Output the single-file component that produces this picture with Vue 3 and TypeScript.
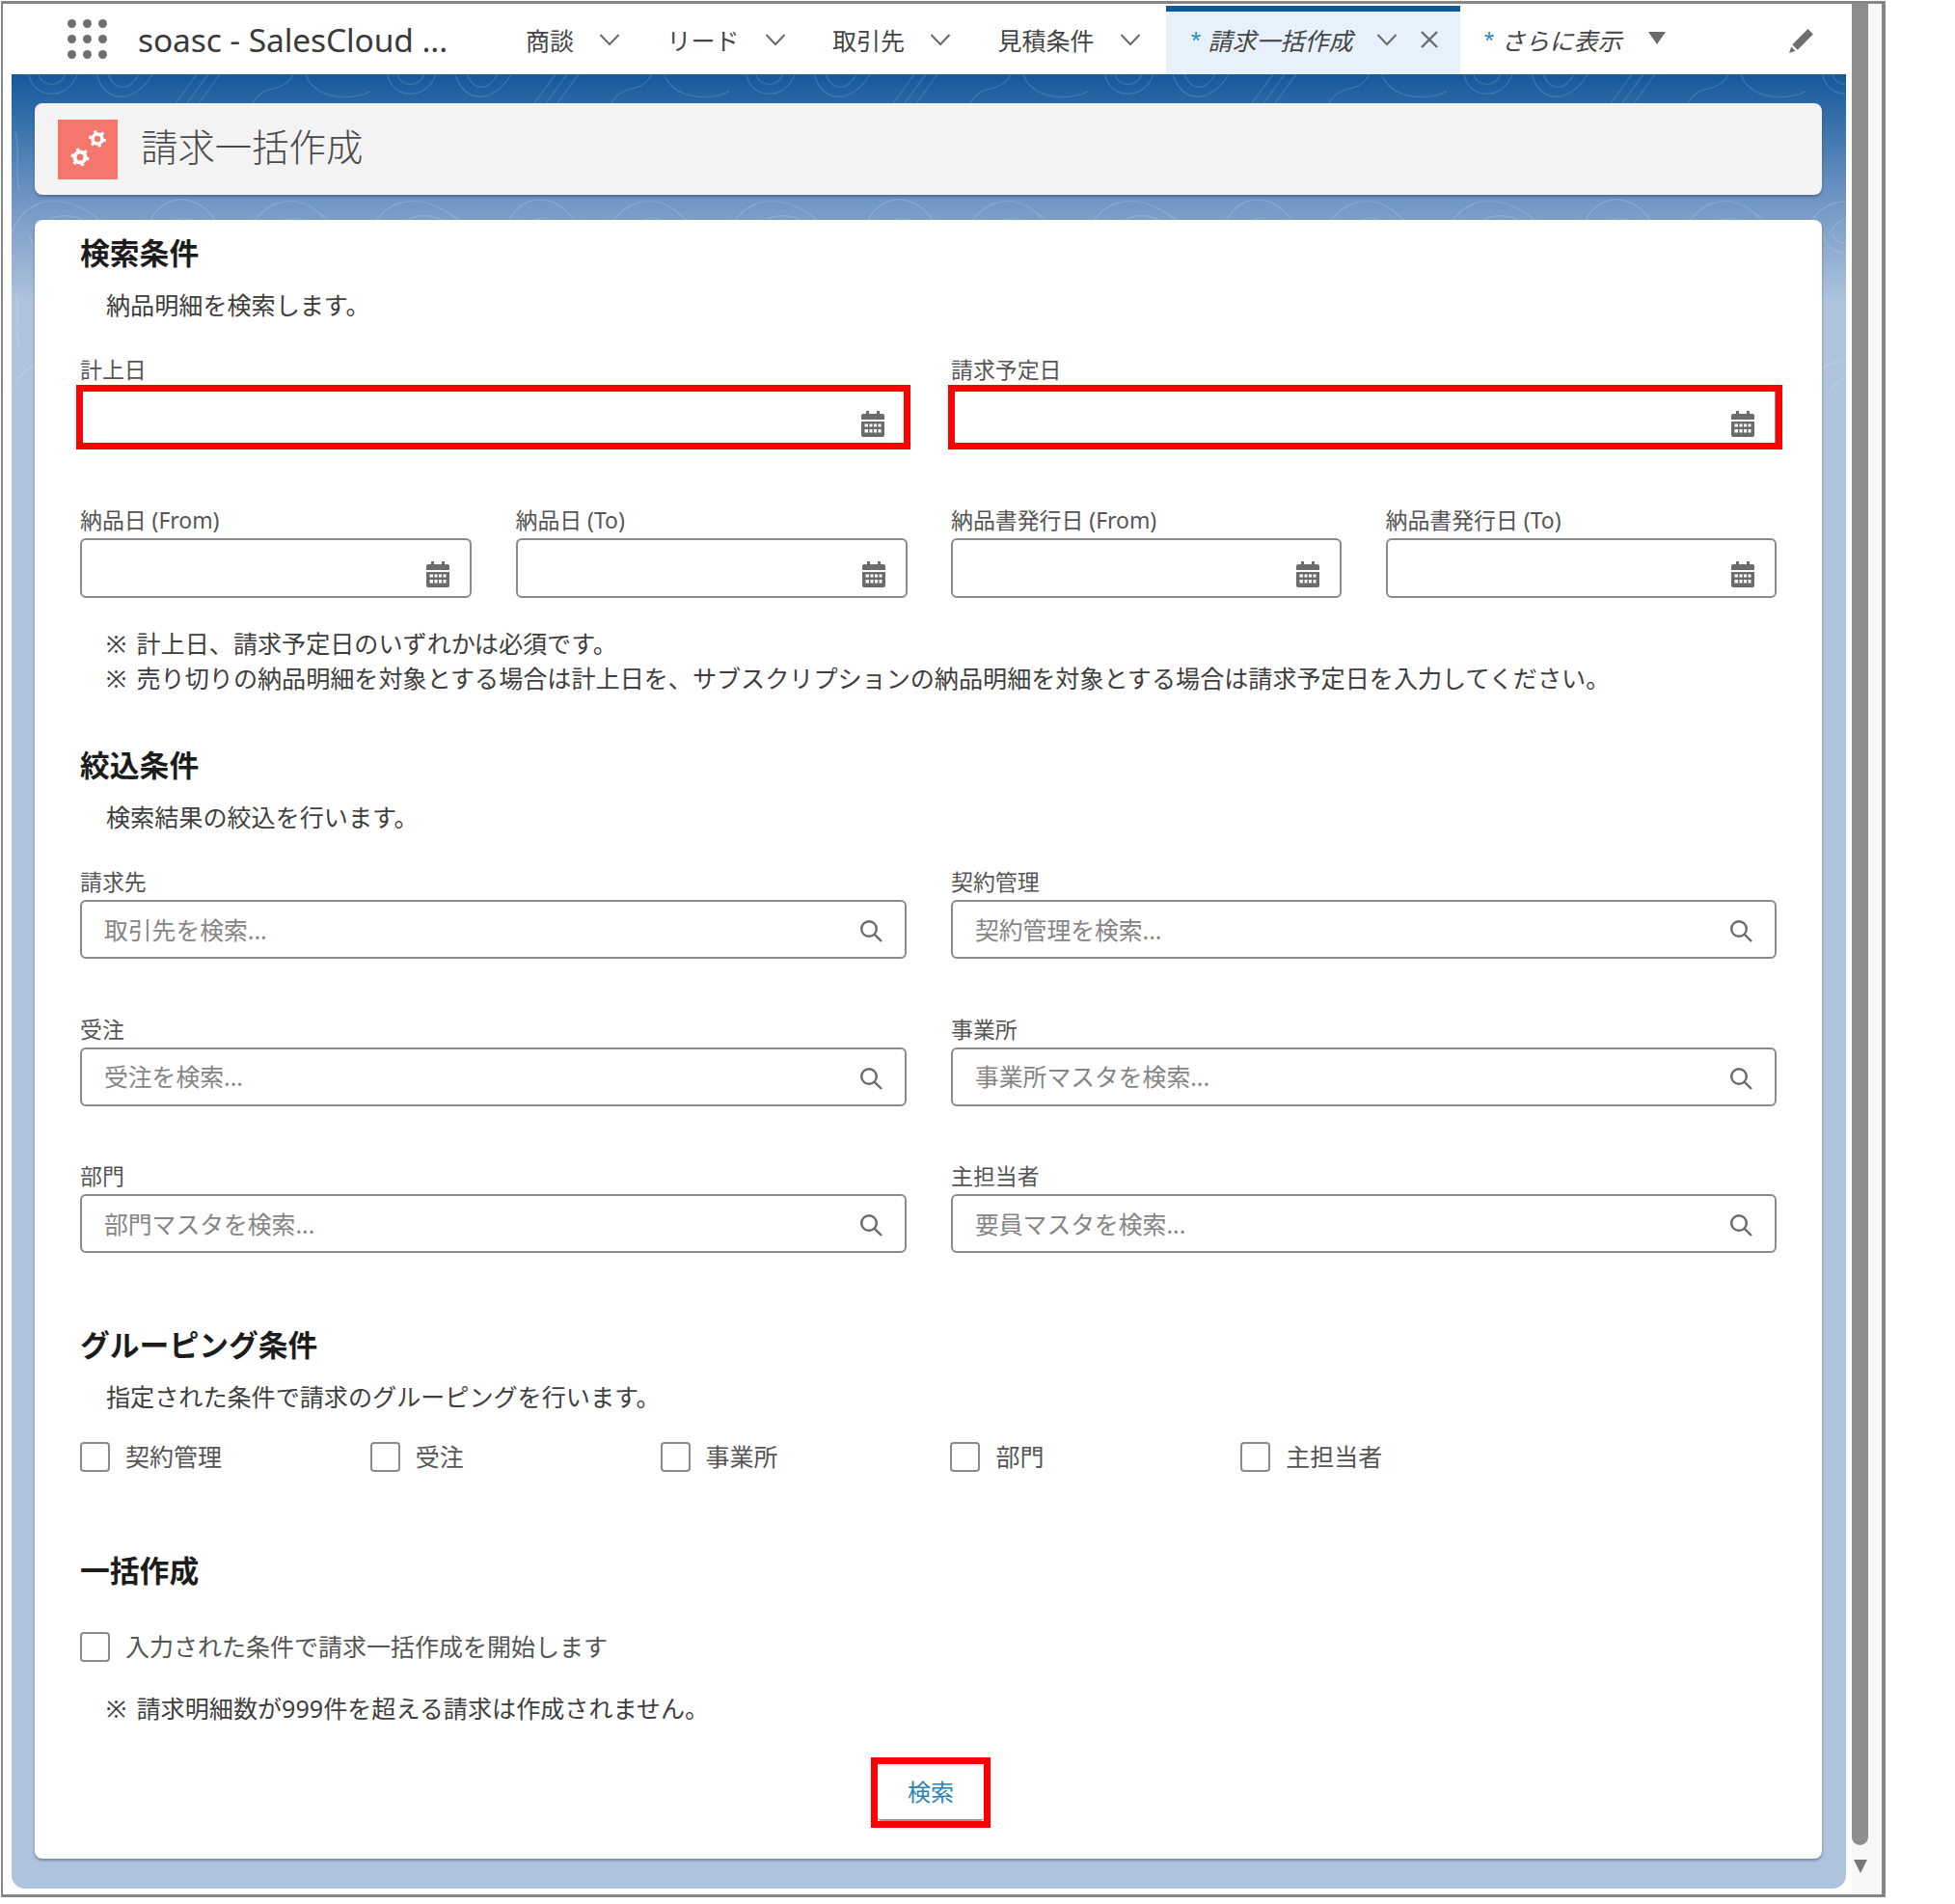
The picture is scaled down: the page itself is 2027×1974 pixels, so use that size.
<script setup lang="ts">
interface Tab { label: string }
interface Field { label: string; placeholder: string }

const tabs: Tab[] = [{ label: '商談' }, { label: 'リード' }, { label: '取引先' }, { label: '見積条件' }]
const dots: number[] = [0, 1, 2, 3, 4, 5, 6, 7, 8]
const dateFields: string[] = ['納品日 (From)', '納品日 (To)', '納品書発行日 (From)', '納品書発行日 (To)']
const lookups: Field[] = [
  { label: '請求先', placeholder: '取引先を検索...' },
  { label: '契約管理', placeholder: '契約管理を検索...' },
  { label: '受注', placeholder: '受注を検索...' },
  { label: '事業所', placeholder: '事業所マスタを検索...' },
  { label: '部門', placeholder: '部門マスタを検索...' },
  { label: '主担当者', placeholder: '要員マスタを検索...' },
]
const groupings: string[] = ['契約管理', '受注', '事業所', '部門', '主担当者']
</script>

<template>
  <div class="frame">
    <div class="main">
      <nav class="nav">
        <div class="launcher"><i v-for="d in dots" :key="d"></i></div>
        <div class="app-name">soasc - SalesCloud ...</div>
        <div v-for="t in tabs" :key="t.label" class="tab">
          <span>{{ t.label }}</span>
          <svg class="chev" viewBox="0 0 22 14"><path d="M1.5 2 L11 12 L20.5 2" /></svg>
        </div>
        <div class="tab-active">
          <b class="star">*</b><span>請求一括作成</span>
          <svg class="chev" viewBox="0 0 22 14"><path d="M1.5 2 L11 12 L20.5 2" /></svg>
          <svg class="close" viewBox="0 0 20 20"><path d="M2 2 L18 18 M18 2 L2 18" /></svg>
        </div>
        <div class="tab-more">
          <b class="star">*</b><span>さらに表示</span>
          <svg class="tri" viewBox="0 0 18 13"><path d="M0 0 H18 L9 13 Z" /></svg>
        </div>
        <svg class="pencil" viewBox="0 0 25 25"><path d="M19 1 L24 6 L9 21 L4 16 Z M3 18 L7 22 L1 24 Z" /></svg>
      </nav>

      <div class="stage">
        <svg class="topo" xmlns="http://www.w3.org/2000/svg" width="1901" height="330">
          <defs>
            <pattern id="contour" width="372" height="165" patternUnits="userSpaceOnUse">
              <g fill="none" stroke="#ffffff" stroke-opacity=".16" stroke-width="1.1">
                <path d="M18 0 C22 26 58 28 68 0" />
                <path d="M28 0 C32 14 50 14 56 0" />
                <path d="M88 0 C98 32 128 30 146 0" />
                <path d="M100 0 C108 18 122 18 132 0" />
                <path d="M170 30 L192 0 M182 30 L204 0 M194 30 L216 0" />
                <path d="M250 30 C262 8 280 22 292 0" />
                <path d="M305 0 C312 22 345 30 372 18" />
                <path d="M0 165 C12 132 40 126 66 136 C92 146 100 165 122 165" />
                <path d="M24 165 C36 146 56 142 76 152 C84 157 88 162 92 165" />
                <path d="M138 165 C150 128 176 124 196 136 C214 148 216 165 226 165" />
                <path d="M160 165 C168 146 186 142 198 165" />
                <path d="M246 165 C256 134 290 122 314 140 C330 152 340 165 352 165" />
                <path d="M272 165 C282 146 300 142 318 165" />
                <path d="M4 60 C10 80 2 100 8 120 M360 60 C368 84 360 100 366 118" />
              </g>
            </pattern>
          </defs>
          <rect width="1901" height="330" fill="url(#contour)" />
        </svg>

        <header class="page-head">
          <div class="head-icon">
            <svg viewBox="0 0 62 62" width="62" height="62">
              <g fill="none" stroke="#fff">
                <circle cx="23" cy="39" r="5.5" stroke-width="4" />
                <circle cx="23" cy="39" r="8" stroke-width="3" stroke-dasharray="3.2 5.2" />
                <circle cx="41" cy="20" r="5" stroke-width="3.6" />
                <circle cx="41" cy="20" r="7.5" stroke-width="3" stroke-dasharray="3 4.85" />
              </g>
            </svg>
          </div>
          <h1>請求一括作成</h1>
        </header>

        <main class="card">
          <h2 class="sec first">検索条件</h2>
          <p class="desc">納品明細を検索します。</p>

          <div class="grid-2 req-row">
            <div class="field">
              <label>計上日</label>
              <div class="input tall">
                <svg class="cal" viewBox="0 0 24 27"><use href="#cal-shape" /></svg>
              </div>
              <span class="red red-left"></span>
            </div>
            <div class="field">
              <label>請求予定日</label>
              <div class="input tall">
                <svg class="cal" viewBox="0 0 24 27"><use href="#cal-shape" /></svg>
              </div>
              <span class="red red-right"></span>
            </div>
          </div>

          <div class="grid-4">
            <div v-for="d in dateFields" :key="d" class="field">
              <label>{{ d }}</label>
              <div class="input tall">
                <svg class="cal" viewBox="0 0 24 27"><use href="#cal-shape" /></svg>
              </div>
            </div>
          </div>

          <div class="notes">
            <p>※ 計上日、請求予定日のいずれかは必須です。</p>
            <p>※ 売り切りの納品明細を対象とする場合は計上日を、サブスクリプションの納品明細を対象とする場合は請求予定日を入力してください。</p>
          </div>

          <h2 class="sec s2">絞込条件</h2>
          <p class="desc">検索結果の絞込を行います。</p>

          <div class="grid-2 lookups">
            <div v-for="f in lookups" :key="f.label" class="field">
              <label>{{ f.label }}</label>
              <div class="input">
                <span class="ph">{{ f.placeholder }}</span>
                <svg class="search" viewBox="0 0 24 24"><circle cx="10" cy="10" r="7.8" /><path d="M15.8 15.8 L23 23" /></svg>
              </div>
            </div>
          </div>

          <h2 class="sec s3">グルーピング条件</h2>
          <p class="desc">指定された条件で請求のグルーピングを行います。</p>

          <div class="checks">
            <div v-for="g in groupings" :key="g" class="check"><i class="box"></i><span>{{ g }}</span></div>
          </div>

          <h2 class="sec s4">一括作成</h2>
          <div class="check solo"><i class="box"></i><span>入力された条件で請求一括作成を開始します</span></div>
          <p class="note-last">※ 請求明細数が999件を超える請求は作成されません。</p>

          <div class="actions">
            <div class="btn-wrap">
              <button class="btn" type="button">検索</button>
              <span class="red red-btn"></span>
            </div>
          </div>
        </main>
      </div>
    </div>

    <aside class="scroll">
      <div class="thumb"></div>
      <svg class="down" viewBox="0 0 14 14"><path d="M0 0 H14 L7 14 Z" /></svg>
    </aside>

    <svg class="defs" width="0" height="0">
      <defs>
        <g id="cal-shape">
          <path fill="#6b6b6b" d="M5 0 H8 V3 H16 V0 H19 V3 H22 Q24 3 24 5 V9 H0 V5 Q0 3 2 3 H5 Z" />
          <path fill="#6b6b6b" fill-rule="evenodd" d="M0 11 H24 V25 Q24 27 22 27 H2 Q0 27 0 25 Z M3.5 13.5 V16.5 H7 V13.5 Z M8.5 13.5 V16.5 H11.5 V13.5 Z M13 13.5 V16.5 H16 V13.5 Z M17.5 13.5 V16.5 H20.5 V13.5 Z M3.5 19 V22.5 H7 V19 Z M8.5 19 V22.5 H11.5 V19 Z M13 19 V22.5 H16 V19 Z M17.5 19 V22.5 H20.5 V19 Z" />
        </g>
      </defs>
    </svg>
  </div>
</template>

<style scoped>
.frame {
  position: relative;
  box-sizing: border-box;
  width: 1954px;
  height: 1966px;
  margin: 1px 0 0 1px;
  border: solid #868686;
  border-width: 3px 4px 3px 2px;
  display: flex;
  background: #fff;
  font-family: "Noto Sans", "Noto Sans CJK JP", sans-serif;
  color: #444;
}
.defs { position: absolute; }
.main {
  flex: 1;
  margin-left: 9px;
  padding-bottom: 6px;
  display: flex;
  flex-direction: column;
  min-width: 0;
}
.scroll {
  width: 37px;
  flex: none;
  background: #f7f7f7;
  border-left: 6px solid #fff;
  box-sizing: border-box;
  display: flex;
  flex-direction: column;
  align-items: flex-start;
}
.thumb {
  width: 17px;
  height: 1909px;
  background: #8e8e8e;
  border-radius: 0 0 9px 9px;
}
.down { width: 14px; height: 14px; margin: 15px 0 0 2px; fill: #777; }

/* nav */
.nav {
  height: 73px;
  flex: none;
  display: flex;
  align-items: center;
  padding-left: 58px;
  padding-right: 33px;
  font-size: 25px;
  color: #444;
}
.launcher {
  width: 41px;
  display: grid;
  grid-template-columns: repeat(3, 9px);
  grid-auto-rows: 9px;
  gap: 7px;
  margin-right: 32px;
}
.launcher i { border-radius: 50%; background: #6f6f6f; }
.app-name {
  width: 402px;
  flex: none;
  font-family: "Noto Sans", sans-serif;
  font-size: 33.5px;
  letter-spacing: -0.1px;
  color: #3a3a3a;
}
.tab { display: flex; align-items: center; gap: 26px; margin-right: 48.5px; }
.tab:nth-of-type(6) { margin-right: 26px; }
.chev { width: 22px; height: 14px; fill: none; stroke: #6b6b6b; stroke-width: 2; flex: none; }
.tab-active {
  align-self: stretch;
  box-sizing: border-box;
  width: 305px;
  margin-top: 2px;
  padding: 0 22px 8px 26px;
  display: flex;
  align-items: center;
  background: #e6f1fb;
  border-top: 6px solid #0b5c99;
  font-style: italic;
  white-space: nowrap;
}
.tab-active .chev { margin-left: 24px; }
.close { width: 20px; height: 20px; margin-left: 23px; fill: none; stroke: #6b6b6b; stroke-width: 2.4; flex: none; }
.tab-more { display: flex; align-items: center; padding-left: 25px; font-style: italic; }
.star {
  width: 18px;
  flex: none;
  font-weight: 400;
  font-style: normal;
  font-size: 20px;
  color: #2a86b8;
}
.tri { width: 18px; height: 13px; margin-left: 27px; fill: #6b6b6b; margin-top: -2px; }
.pencil { width: 27px; height: 27px; margin-left: auto; fill: #6e6e6e; margin-top: 3px; }

/* stage */
.stage {
  position: relative;
  flex: 1;
  box-sizing: border-box;
  padding: 30px 25px 31px 24px;
  display: flex;
  flex-direction: column;
  gap: 26px;
  border-radius: 0 0 14px 14px;
  overflow: hidden;
  background: linear-gradient(#14599b 0, #7096c3 130px, #aec3de 235px, #aec3de 100%);
}
.topo { position: absolute; left: 0; top: 0; }
.page-head {
  position: relative;
  height: 95px;
  flex: none;
  display: flex;
  align-items: center;
  gap: 24px;
  padding-left: 24px;
  background: #f3f3f3;
  border-radius: 8px;
  box-shadow: 0 2px 3px rgba(40, 60, 90, .45);
}
.head-icon { width: 62px; height: 62px; background: #f4766d; flex: none; }
.head-icon svg { display: block; }
h1 {
  margin: -5px 0 0;
  font-size: 38.4px;
  font-weight: 300;
  color: #4a4a4a;
  line-height: 1;
}
.card {
  position: relative;
  flex: 1;
  box-sizing: border-box;
  padding: 16px 47px 0 47px;
  background: #fff;
  border-radius: 8px;
  box-shadow: 0 2px 3px rgba(60, 75, 100, .5);
}
.sec {
  margin: 0;
  font-size: 30.8px;
  font-weight: 700;
  line-height: 36px;
  color: #1c1c1c;
}
.s2 { margin: 54px 0 1px; }
.s3 { margin-top: 77px; }
.s4 { margin-top: 84px; }
.desc {
  margin: 18px 0 0;
  padding-left: 27px;
  font-size: 25.1px;
  line-height: 36px;
  color: #3e3e3e;
}
.grid-2 { display: grid; grid-template-columns: 857px 856px; column-gap: 46px; }
.grid-4 { display: grid; grid-template-columns: 406px 406px 405px 405px; column-gap: 45.5px; margin-top: 62px; }
.req-row { margin-top: 36px; }
.lookups { margin-top: 36px; row-gap: 59.5px; }
.field { position: relative; }
.field label {
  display: block;
  height: 28px;
  font-size: 22.9px;
  line-height: 28px;
  color: #555;
  margin-bottom: 4px;
  white-space: nowrap;
}
.input {
  position: relative;
  box-sizing: border-box;
  height: 61px;
  border: 2px solid #8a8a8a;
  border-radius: 6px;
  background: #fff;
  display: flex;
  align-items: center;
  padding-left: 23px;
}
.input.tall { height: 62px; }
.ph { font-size: 24.8px; color: #858585; margin-top: -2px; }
.cal { position: absolute; right: 21px; top: 22px; width: 24px; height: 27px; }
.search {
  position: absolute;
  right: 23px;
  top: 18px;
  width: 24px;
  height: 24px;
  fill: none;
  stroke: #6b6b6b;
  stroke-width: 2.4;
}
.red { position: absolute; border: 7px solid #ff0000; box-sizing: border-box; pointer-events: none; }
.red-left { left: -4px; right: -4px; top: 29px; bottom: -2px; }
.red-right { left: -3px; right: -6px; top: 29px; bottom: -2px; }
.red-btn { inset: -7px; }
.notes { margin-top: 29px; padding-left: 27px; }
.notes p { margin: 0; font-size: 25.1px; line-height: 36px; color: #3e3e3e; white-space: nowrap; word-spacing: 4px; }
.checks { display: grid; grid-template-columns: repeat(5, 300.8px); margin-top: 29px; }
.check { display: flex; align-items: center; gap: 16px; height: 31px; font-size: 25px; color: #555; }
.check span { margin-top: -3px; }
.box {
  box-sizing: border-box;
  width: 31px;
  height: 31px;
  flex: none;
  border: 2px solid #8a8a8a;
  border-radius: 4px;
  background: #fff;
}
.solo { margin-top: 46px; }
.note-last { margin: 30px 0 0; padding-left: 27px; font-size: 25.1px; line-height: 36px; color: #3e3e3e; word-spacing: 4px; }
.actions { display: flex; justify-content: center; margin-top: 40px; padding-left: 5px; }
.btn-wrap { position: relative; width: 110px; height: 59px; }
.btn {
  display: block;
  width: 100%;
  height: 100%;
  border: 0;
  border-bottom: 2px solid #999;
  border-radius: 4px;
  background: #fff;
  font: inherit;
  font-size: 24px;
  color: #2a82b2;
  padding: 0 0 3px;
}
</style>
